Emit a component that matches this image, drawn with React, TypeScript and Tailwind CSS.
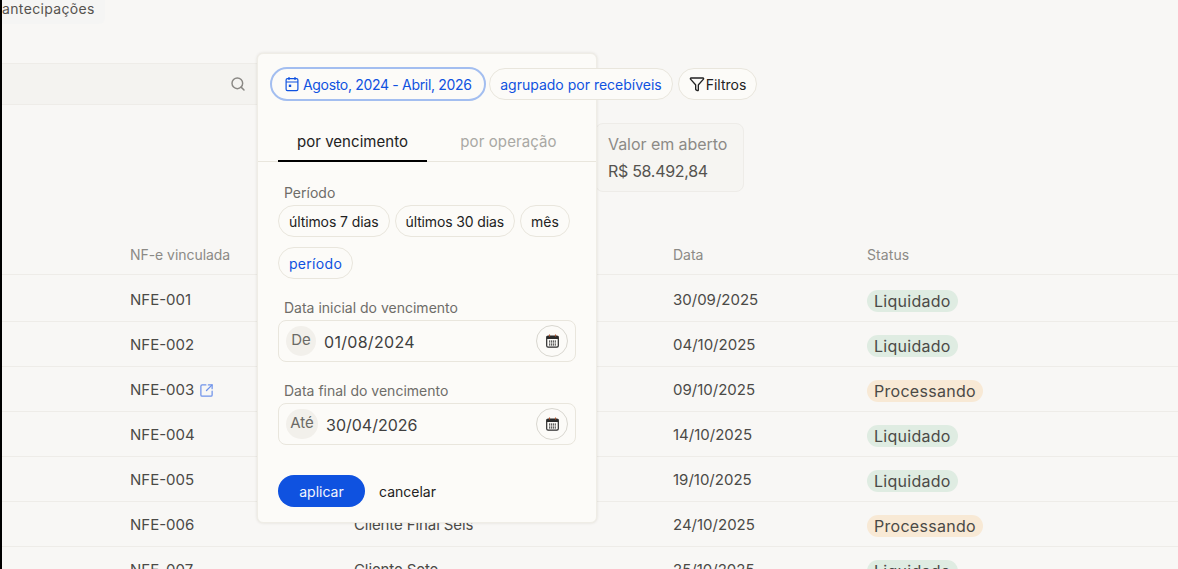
import { Search, Filter, SquareArrowOutUpRight } from "lucide-react";

const rows = [
  { nf: "NFE-001", cli: "", d: "30/09/2025", s: "Liquidado", h: "h-[47px] pt-[2px]" },
  { nf: "NFE-002", cli: "", d: "04/10/2025", s: "Liquidado", h: "h-[45px]" },
  { nf: "NFE-003", cli: "", d: "09/10/2025", s: "Processando", h: "h-[45px]", link: true },
  { nf: "NFE-004", cli: "", d: "14/10/2025", s: "Liquidado", h: "h-[45px]" },
  { nf: "NFE-005", cli: "", d: "19/10/2025", s: "Liquidado", h: "h-[45px]" },
  { nf: "NFE-006", cli: "Cliente Final Seis", d: "24/10/2025", s: "Processando", h: "h-[45px]" },
  { nf: "NFE-007", cli: "Cliente Sete", d: "25/10/2025", s: "Liquidado", h: "h-[45px]" },
];

function CalSmall() {
  return (
    <svg width="14" height="16" viewBox="0 0 14 16" fill="none" stroke="#0f52e0" strokeWidth="1.2">
      <rect x="1.1" y="2.6" width="11.8" height="12" rx="1.4" />
      <path d="M1.1 6h11.8M4 1v3M10 1v3" />
      <rect x="3.8" y="8.6" width="2.4" height="2.4" fill="#0f52e0" stroke="none" />
    </svg>
  );
}

function CalDark() {
  return (
    <svg width="13" height="14" viewBox="0 0 13 14" fill="none">
      <rect x="0.7" y="2" width="11.6" height="11.2" rx="1.4" stroke="#2b2b2b" strokeWidth="1.2" />
      <rect x="0.7" y="2" width="11.6" height="3" fill="#2b2b2b" />
      <path d="M3.5 .6v2M9.5 .6v2" stroke="#b4552d" strokeWidth="1.1" />
      <path d="M3 7.2h7M3 9h7M3 10.8h7" stroke="#2b2b2b" strokeWidth="1.2" strokeDasharray="1.2 .7" />
    </svg>
  );
}

function DateField({ tag, value, tagW, track }: { tag: string; value: string; tagW: string; track: string }) {
  return (
    <div className="flex h-[42px] items-center rounded-lg border border-[#e9e6dd] pl-[7px] pr-[7px]">
      <span className={`flex h-[30px] items-center justify-center rounded-full bg-[#f2f0eb] pb-[1px] text-[15px] text-[#6b6a66] ${tagW}`}>{tag}</span>
      <span className={`ml-[8px] pt-[1px] text-[16px] text-[#3f3f3f] ${track}`}>{value}</span>
      <span className="ml-auto flex h-8 w-8 items-center justify-center rounded-full border border-[#d9d7d0]">
        <CalDark />
      </span>
    </div>
  );
}

function Chip({ children, blue, track }: { children: string; blue?: boolean; track: string }) {
  return (
    <span className={`flex h-8 items-center rounded-full border border-[#e9e6dd] px-[10px] text-[14px] ${track} ${blue ? "text-[#0f52e0]" : "text-[#222]"}`}>
      {children}
    </span>
  );
}

export default function App() {
  return (
    <div className="relative h-[569px] w-[1178px] overflow-hidden border-l-2 border-black bg-[#f8f7f5] font-['Inter','Liberation_Sans',sans-serif]">
      <div className="h-[24px] w-[103px] rounded-br-md bg-[#f5f5f4] text-[14px] leading-[18px] tracking-[0.35px] text-[#55534f]">antecipações</div>

      <div className="mt-[39px] flex h-[42px] w-[270px] items-center border-y border-[#eeece8] bg-[#f4f3f0] pl-[228px]">
        <Search size={16} strokeWidth={2.2} className="text-[#8a8884]" />
      </div>

      <div className="mt-[18px] flex h-[69px] justify-start pl-[593px]">
        <div className="w-[149px] rounded-lg border border-[#eeece8] bg-[#f6f5f2] px-[12px] pt-[9px]">
          <div className="text-[16px] leading-[22px] text-[#8c8a86] tracking-[-0.05px]">Valor em aberto</div>
          <div className="mt-[5px] text-[16px] leading-[22px] text-[#55534f] tracking-[-0.3px]">R$ 58.492,84</div>
        </div>
      </div>

      <div className="mt-[36px] grid h-[47px] grid-cols-[224px_319px_194px_1fr] items-center border-b border-[#eeece8] pl-[128px] pt-[6px] text-[14px] text-[#8c8a86]">
        <span className="tracking-[-0.05px]">NF-e vinculada</span>
        <span></span>
        <span>Data</span>
        <span className="tracking-[0.1px]">Status</span>
      </div>

      {rows.map((r) => (
        <div key={r.nf} className={`grid grid-cols-[224px_319px_194px_1fr] items-center border-b border-[#eeece8] pl-[128px] text-[15px] text-[#4b4a47] ${r.h}`}>
          <span className="flex items-center gap-[5px] pt-[2px]">
            {r.nf}
            {r.link && <SquareArrowOutUpRight size={15} className="text-[#6f93ea]" />}
          </span>
          <span className="pt-[2px] tracking-[-0.1px]">{r.cli}</span>
          <span className="pt-[2px]">{r.d}</span>
          <span className="mt-[5px]">
            <span className={`inline-flex h-[22px] items-center rounded-full px-[7px] text-[16px] tracking-[0.28px] ${r.s === "Liquidado" ? "bg-[#dfece2]" : "bg-[#f8e9d5]"}`}>
              {r.s}
            </span>
          </span>
        </div>
      ))}

      <div className="absolute left-[255px] top-[53px] h-[470px] w-[340px] rounded-md border border-[#efede6] bg-[#fcfbf8] shadow-[0_0_3px_rgba(80,70,40,0.15)]">
        <div className="mt-[61px] flex h-[47px] border-b border-[#e9e6dd] pl-[20px] text-[15px]">
          <span className="flex h-[47px] w-[149px] items-center justify-center border-b-2 border-black pt-[10px] tracking-[0.05px] text-[#222]">por vencimento</span>
          <span className="flex h-[46px] w-[163px] items-center justify-center pt-[8px] tracking-[0.1px] text-[#a9a8a4]">por operação</span>
        </div>
        <div className="px-[20px]">
          <div className="mt-[21px] pl-[6px] text-[14px] leading-[20px] text-[#6e6d69]">Período</div>
          <div className="mt-[2px] flex flex-wrap gap-x-[5px] gap-y-[10px]">
            <Chip track="tracking-[-0.1px]">últimos 7 dias</Chip>
            <Chip track="tracking-[-0.13px]">últimos 30 dias</Chip>
            <Chip track="tracking-[0px]">mês</Chip>
            <Chip blue track="tracking-[0.3px]">período</Chip>
          </div>
          <div className="mt-[19px] pl-[6px] text-[14px] leading-[20px] text-[#6e6d69]">Data inicial do vencimento</div>
          <div className="mt-[2px]"><DateField tag="De" value="01/08/2024" tagW="w-[30px]" track="tracking-[0.3px]" /></div>
          <div className="mt-[19px] pl-[6px] text-[14px] leading-[20px] text-[#6e6d69]">Data final do vencimento</div>
          <div className="mt-[2px]"><DateField tag="Até" value="30/04/2026" tagW="w-[32px]" track="tracking-[0px]" /></div>
          <div className="mt-[30px] flex items-center">
            <span className="flex h-8 w-[87px] items-center justify-center rounded-full bg-[#0f52e0] text-[14px] text-[#f4f6fd]">aplicar</span>
            <span className="ml-[14px] text-[14px] text-[#222]">cancelar</span>
          </div>
        </div>
      </div>

      <div className="absolute left-[268px] top-[67px] flex items-center gap-[3px]">
        <span className="flex h-[34px] w-[216px] items-center gap-[4px] rounded-full border-2 border-[#a3bef0] bg-[#fcfbf8] pl-[13px] text-[14px] tracking-[-0.32px] text-[#0f52e0]">
          <CalSmall />Agosto, 2024 - Abril, 2026
        </span>
        <span className="flex h-8 w-[184px] items-center justify-center rounded-full border border-[#e9e6dd] bg-[#fcfbf8] text-[14px] text-[#0f52e0]">agrupado por recebíveis</span>
        <span className="ml-[2px] flex h-8 w-[79px] items-center justify-center gap-[1px] rounded-full border border-[#e9e6dd] bg-[#fcfbf8] text-[14px] text-[#222]">
          <Filter size={16} />Filtros
        </span>
      </div>
    </div>
  );
}
